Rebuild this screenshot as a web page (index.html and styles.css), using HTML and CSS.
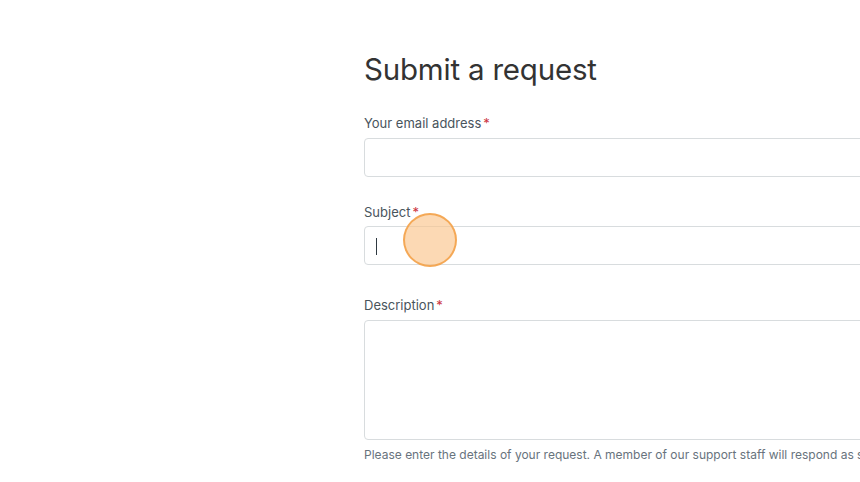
FILE: index.html
```html
<!DOCTYPE html>
<html>
<head>
    <title>Submit a request</title>
    <link rel="stylesheet" href="styles.css">
</head>
<body>
    <div class="page">
        <h1>Submit a request</h1>
        <form class="request-form">
            <div class="field">
                <label>Your email address<span class="req">*</span></label>
                <div class="input"></div>
            </div>
            <div class="field subject">
                <label>Subject<span class="req">*</span></label>
                <div class="input focused"><span class="caret"></span></div>
            </div>
            <div class="field">
                <label>Description<span class="req">*</span></label>
                <div class="textarea"></div>
                <p class="hint">Please enter the details of your request. A member of our support staff will respond as soon as possible.</p>
            </div>
        </form>
    </div>
    <div class="click"></div>
</body>
</html>
```

FILE: styles.css
```css
html, body {
    margin: 0;
    height: 100%;
    overflow: hidden;
    background-color: #fff;
    font-family: Inter, "Noto Sans", sans-serif;
}
.page {
    padding: 48px 0 0 364px;
    width: 700px;
    white-space: nowrap;
}
h1 {
    margin: 0 0 24px;
    font-size: 29.5px;
    font-weight: 400;
    line-height: 42px;
    color: #333;
    letter-spacing: -0.2px;
}
.field {
    margin-bottom: 26px;
}
.field.subject {
    margin-bottom: 31px;
}
.field label {
    display: block;
    font-size: 13px;
    line-height: 18px;
    color: #49545c;
    margin-bottom: 6px;
}
.field.subject label {
    margin-bottom: 5px;
}
.req {
    color: #cc3340;
    margin-left: 2px;
}
.input {
    height: 37px;
    border: 1px solid #d8dcde;
    border-radius: 4px;
    position: relative;
}
.textarea {
    height: 118px;
    border: 1px solid #d8dcde;
    border-radius: 4px;
}
.caret {
    position: absolute;
    left: 11px;
    top: 11px;
    width: 1px;
    height: 17px;
    background-color: #2f3941;
}
.hint {
    margin: 7px 0 0;
    font-size: 12px;
    line-height: 16px;
    color: #68737d;
}
.click {
    position: absolute;
    left: 403px;
    top: 213px;
    width: 50px;
    height: 50px;
    border-radius: 50%;
    background-color: rgba(250, 196, 140, 0.65);
    border: 2px solid rgba(243, 160, 70, 0.85);
}
```
